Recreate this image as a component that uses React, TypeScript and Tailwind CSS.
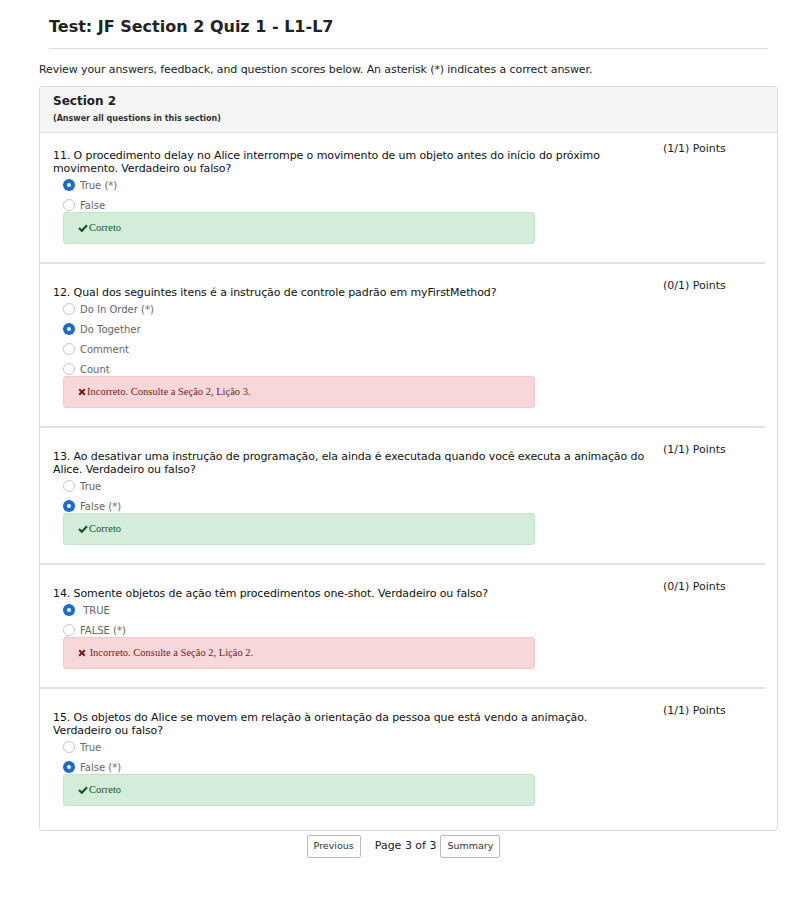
type Option = { label: string; selected?: boolean };

type Question = {
  num: number;
  text: string;
  points: string;
  options: Option[];
  correct: boolean;
  feedback: string;
};

const questions: Question[] = [
  {
    num: 11,
    text: "O procedimento delay no Alice interrompe o movimento de um objeto antes do início do próximo movimento. Verdadeiro ou falso?",
    points: "(1/1) Points",
    options: [{ label: "True (*)", selected: true }, { label: "False" }],
    correct: true,
    feedback: "Correto",
  },
  {
    num: 12,
    text: "Qual dos seguintes itens é a instrução de controle padrão em myFirstMethod?",
    points: "(0/1) Points",
    options: [
      { label: "Do In Order (*)" },
      { label: "Do Together", selected: true },
      { label: "Comment" },
      { label: "Count" },
    ],
    correct: false,
    feedback: "Incorreto. Consulte a Seção 2, Lição 3.",
  },
  {
    num: 13,
    text: "Ao desativar uma instrução de programação, ela ainda é executada quando você executa a animação do Alice. Verdadeiro ou falso?",
    points: "(1/1) Points",
    options: [{ label: "True" }, { label: "False (*)", selected: true }],
    correct: true,
    feedback: "Correto",
  },
  {
    num: 14,
    text: "Somente objetos de ação têm procedimentos one-shot. Verdadeiro ou falso?",
    points: "(0/1) Points",
    options: [{ label: "\u00a0TRUE", selected: true }, { label: "FALSE (*)" }],
    correct: false,
    feedback: "\u00a0Incorreto. Consulte a Seção 2, Lição 2.",
  },
  {
    num: 15,
    text: "Os objetos do Alice se movem em relação à orientação da pessoa que está vendo a animação. Verdadeiro ou falso?",
    points: "(1/1) Points",
    options: [{ label: "True" }, { label: "False (*)", selected: true }],
    correct: true,
    feedback: "Correto",
  },
];

function Radio({ checked }: { checked?: boolean }) {
  if (checked) {
    return (
      <span className="flex h-[12px] w-[12px] items-center justify-center rounded-full bg-[#1a6bd0]">
        <span className="h-[4px] w-[4px] rounded-full bg-white" />
      </span>
    );
  }
  return <span className="h-[12px] w-[12px] rounded-full border border-[#c8c8c8] bg-white" />;
}

function CheckIcon() {
  return (
    <svg width="10" height="8" viewBox="0 0 10 8" className="mr-px">
      <polyline points="1,4 3.8,6.8 9,1.2" fill="none" stroke="currentColor" strokeWidth="2.2" />
    </svg>
  );
}

function CrossIcon() {
  return (
    <svg width="8" height="8" viewBox="0 0 8 8" className="mr-px">
      <path d="M1.2 1.2 L6.8 6.8 M6.8 1.2 L1.2 6.8" stroke="currentColor" strokeWidth="2" />
    </svg>
  );
}

function QuestionBlock({ q, first, last }: { q: Question; first: boolean; last: boolean }) {
  return (
    <div
      className={`flex ${first ? "pt-[9px]" : "pt-[15px]"} ${
        last ? "pb-[24px]" : "pb-[18px] border-b-2 border-[#dee2e6]"
      }`}
    >
      <div className="flex-1 pl-[13px] pr-[14px]">
        <p className="mt-[7px] max-w-[593px] text-[11px] leading-[13px] tracking-[-0.1px] text-[#111]">
          {q.num}. {q.text}
        </p>
        <div className="flex flex-col">
          {q.options.map((o) => (
            <div key={o.label} className="flex h-[20px] items-center pl-[10px]">
              <Radio checked={o.selected} />
              <span className="ml-[5px] text-[10px] text-[#666]">{o.label}</span>
            </div>
          ))}
        </div>
        <div
          className={`-mt-[3px] ml-[10px] flex h-[32px] w-[472px] items-center rounded-[3px] border pl-[14px] text-[10.5px] ${
            q.correct
              ? "border-[#c3e6cb] bg-[#d4edda] text-[#155724]"
              : "border-[#f5c6cb] bg-[#f8d7da] text-[#721c24]"
          }`}
          style={{ fontFamily: '"Liberation Serif", "Times New Roman", serif' }}
        >
          {q.correct ? <CheckIcon /> : <CrossIcon />}
          <span>{q.feedback}</span>
        </div>
      </div>
      <div className="w-[102px] shrink-0 text-[11px] leading-[13px] text-[#222]">{q.points}</div>
    </div>
  );
}

export default function App() {
  return (
    <div
      className="min-h-[909px] w-[807px] bg-white pl-[39px] pr-[29px]"
      style={{ fontFamily: '"DejaVu Sans", Verdana, sans-serif' }}
    >
      <div className="px-[10px] pt-[16px]">
        <h1 className="pb-[11px] text-[16px] font-bold leading-[21px] text-[#222]">
          Test: JF Section 2 Quiz 1 - L1-L7
        </h1>
        <div className="h-px bg-[#ddd]" />
      </div>
      <p className="mt-[14px] text-[11px] leading-[13px] tracking-[-0.1px] text-[#222]">
        Review your answers, feedback, and question scores below. An asterisk (*) indicates a correct answer.
      </p>

      <div className="mt-[10px] rounded-[3px] border border-[#ddd]">
        <div className="border-b border-[#ddd] bg-[#f5f5f5] pl-[13px] pt-[6px] pb-[7px]">
          <h2 className="text-[12px] font-bold leading-[17px] text-[#222]">Section 2</h2>
          <p className="mt-[3px] text-[8px] font-bold leading-[12px] text-[#333]">
            (Answer all questions in this section)
          </p>
        </div>
        <div className="pr-[12px]">
          {questions.map((q, i) => (
            <QuestionBlock key={q.num} q={q} first={i === 0} last={i === questions.length - 1} />
          ))}
        </div>
      </div>

      <div className="mt-[4px] flex items-center justify-center pr-[10px]">
        <button className="h-[23px] rounded-[2px] border border-[#bbb] bg-white px-[6px] text-[9.5px] text-[#333]">
          Previous
        </button>
        <span className="ml-[14px] mr-[4px] text-[11px] text-[#222]">Page 3 of 3</span>
        <button className="h-[23px] rounded-[2px] border border-[#bbb] bg-white px-[6px] text-[9.5px] text-[#333]">
          Summary
        </button>
      </div>
    </div>
  );
}
